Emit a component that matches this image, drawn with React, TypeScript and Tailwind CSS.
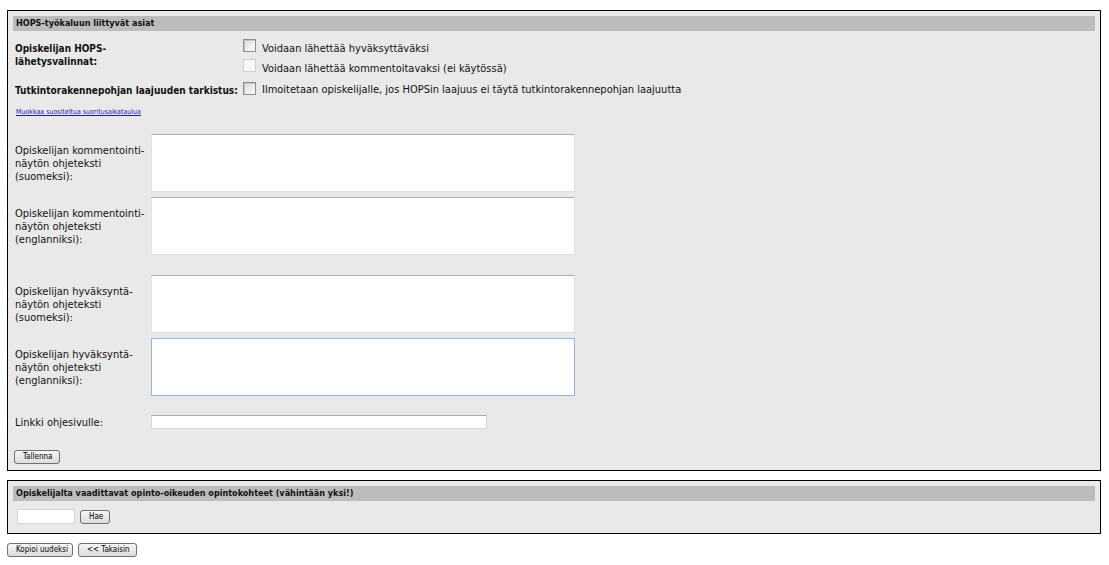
import React from "react";

const font = { fontFamily: '"DejaVu Sans Condensed", "DejaVu Sans", Tahoma, sans-serif' };

const Checkbox = ({ disabled = false }: { disabled?: boolean }) => (
  <span
    className={`inline-block h-[13px] w-[13px] shrink-0 border ${
      disabled
        ? "border-[#d0d0d0] bg-[#f7f7f7]"
        : "border-[#8f8f8f] bg-gradient-to-br from-[#dcdcdc] to-[#fbfbfb] shadow-[inset_1px_1px_0_#c4c4c4]"
    }`}
  />
);

const Btn = ({ children, className = "" }: { children: React.ReactNode; className?: string }) => (
  <button
    type="button"
    className={`h-[14px] whitespace-nowrap rounded-[3px] border border-[#707070] bg-gradient-to-b from-[#f6f6f6] to-[#dddddd] px-[8px] text-[8px] leading-[12px] text-black ${className}`}
  >
    {children}
  </button>
);

const textAreas = [
  { label: ["Opiskelijan kommentointi-", "näytön ohjeteksti", "(suomeksi):"], focus: false, gap: false },
  { label: ["Opiskelijan kommentointi-", "näytön ohjeteksti", "(englanniksi):"], focus: false, gap: true },
  { label: ["Opiskelijan hyväksyntä-", "näytön ohjeteksti", "(suomeksi):"], focus: false, gap: false },
  { label: ["Opiskelijan hyväksyntä-", "näytön ohjeteksti", "(englanniksi):"], focus: true, gap: false },
];

export default function App() {
  return (
    <div className="min-h-[565px] bg-white pl-[7px] pr-[8px] pt-[10px] text-[#111]" style={font}>
      {/* HOPS panel */}
      <div className="border border-black bg-[#e9e9e9] px-[5px] pt-[5px] pb-[4px]">
        <div className="flex h-[15px] items-center bg-[#bcbcbc] px-[3px] text-[9px] font-bold">
          HOPS-työkaluun liittyvät asiat
        </div>

        <div className="mt-[8px] grid grid-cols-[228px_1fr] px-[2px] text-[11px] leading-[13px]">
          <div className="pt-[3px] text-[10px] font-bold">
            Opiskelijan HOPS-
            <br />
            lähetysvalinnat:
          </div>
          <div className="flex flex-col gap-[4px]">
            <label className="flex items-start gap-[6px]">
              <Checkbox />
              <span className="mt-[3px]">Voidaan lähettää hyväksyttäväksi</span>
            </label>
            <label className="flex items-start gap-[6px]">
              <Checkbox disabled />
              <span className="mt-[3px]">Voidaan lähettää kommentoitavaksi (ei käytössä)</span>
            </label>
          </div>
          <div className="mt-[8px] whitespace-nowrap pt-[1px] text-[10px] font-bold">
            Tutkintorakennepohjan laajuuden tarkistus:
          </div>
          <label className="mt-[7px] flex items-start gap-[6px]">
            <Checkbox />
            <span className="mt-[1px]">Ilmoitetaan opiskelijalle, jos HOPSin laajuus ei täytä tutkintorakennepohjan laajuutta</span>
          </label>
        </div>

        <a href="#" className="mt-[11px] ml-[3px] block text-[7px] leading-[9px] text-[#1a1aa6] underline">
          Muokkaa suositeltua suoritusaikataulua
        </a>

        <div className="mt-[17px] flex flex-col px-[2px] text-[11px] leading-[13px]">
          {textAreas.map((t, i) => (
            <div key={i} className={`flex items-center ${t.gap ? "mb-[20px]" : "mb-[5px]"}`}>
              <div className="w-[136px]">
                {t.label.map((l) => (
                  <div key={l}>{l}</div>
                ))}
              </div>
              <textarea
                className={`h-[58px] w-[424px] resize-none bg-white outline-none ${
                  t.focus
                    ? "border border-[#8fb8de]"
                    : "border border-[#dfdfdf] border-t-[#adadad] border-l-[#e3e3e3]"
                }`}
              />
            </div>
          ))}
          <div className="mt-[13px] flex items-center">
            <div className="w-[136px] pt-[2px]">Linkki ohjesivulle:</div>
            <input className="h-[14px] w-[336px] border border-[#d6d6d6] border-t-[#acacac] bg-white outline-none" />
          </div>
        </div>

        <div className="mt-[13px]">
          <Btn className="ml-[1px] w-[46px] px-0">Tallenna</Btn>
        </div>
      </div>

      {/* Opinto-oikeus panel */}
      <div className="mt-[9px] border border-black bg-[#e9e9e9] px-[5px] pt-[5px] pb-[9px]">
        <div className="flex h-[15px] items-center bg-[#bcbcbc] px-[3px] text-[9px] font-bold">
          Opiskelijalta vaadittavat opinto-oikeuden opintokohteet (vähintään yksi!)
        </div>
        <div className="mt-[8px] flex items-center gap-[5px] pl-[4px]">
          <input className="h-[15px] w-[58px] border border-[#d6d6d6] bg-white outline-none" />
          <Btn className="w-[30px] px-0">Hae</Btn>
        </div>
      </div>

      <div className="mt-[9px] flex gap-[5px]">
        <Btn className="w-[66px] px-0">Kopioi uudeksi</Btn>
        <Btn className="w-[59px] px-0">&lt;&lt; Takaisin</Btn>
      </div>
    </div>
  );
}
